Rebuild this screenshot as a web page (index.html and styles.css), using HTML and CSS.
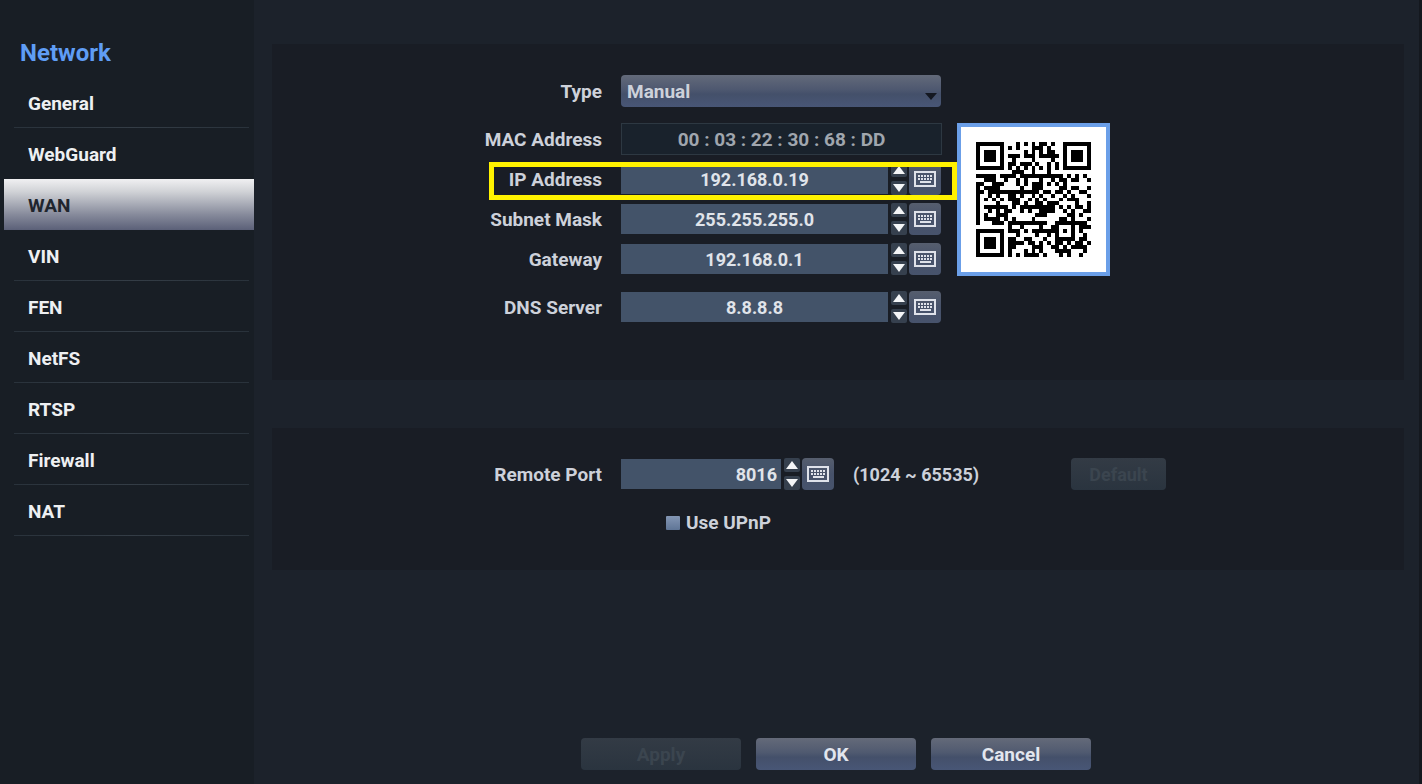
FILE: index.html
```
<!DOCTYPE html>
<html lang="en">
<head>
  <meta charset="UTF-8">
  <meta name="viewport" content="width=device-width, initial-scale=1.0">
  <title>Network - WAN</title>
  <link rel="stylesheet" href="styles.css">
</head>
<body>
  <svg class="sprite" aria-hidden="true">
    <symbol id="keyboard" viewBox="0 0 22 16">
      <path fill="none" stroke="#dfe2ea" stroke-width="2" d="M1 1h20v14H1z"/>
      <path fill="none" stroke="#dfe2ea" stroke-width="2" stroke-dasharray="2 1" d="M4 5h14M4 8h14"/>
      <path fill="none" stroke="#dfe2ea" stroke-width="2" d="M6 11h11"/>
    </symbol>
  </svg>

  <nav class="sidebar">
    <h1>Network</h1>
    <a href="#general">General</a>
    <a href="#webguard" class="no-line">WebGuard</a>
    <a href="#wan" class="active">WAN</a>
    <a href="#vin">VIN</a>
    <a href="#fen">FEN</a>
    <a href="#netfs">NetFS</a>
    <a href="#rtsp">RTSP</a>
    <a href="#firewall">Firewall</a>
    <a href="#nat">NAT</a>
  </nav>

  <main>
    <section class="panel address">
      <div class="fields">
        <div class="row">
          <label for="type">Type</label>
          <div class="select">
            <select id="type">
              <option>Manual</option>
              <option>DHCP</option>
            </select>
          </div>
        </div>
        <div class="row spaced">
          <label for="mac">MAC Address</label>
          <input id="mac" class="readonly" type="text" value="00 : 03 : 22 : 30 : 68 : DD" readonly>
        </div>
        <div class="row highlight">
          <label for="ip">IP Address</label>
          <div class="entry">
            <input id="ip" type="text" value="192.168.0.19">
            <div class="spin"><button class="up" aria-label="Up"></button><button class="down" aria-label="Down"></button></div>
            <button class="key" aria-label="Keyboard"><svg><use href="#keyboard"/></svg></button>
          </div>
        </div>
        <div class="row">
          <label for="mask">Subnet Mask</label>
          <div class="entry">
            <input id="mask" type="text" value="255.255.255.0">
            <div class="spin"><button class="up" aria-label="Up"></button><button class="down" aria-label="Down"></button></div>
            <button class="key" aria-label="Keyboard"><svg><use href="#keyboard"/></svg></button>
          </div>
        </div>
        <div class="row">
          <label for="gateway">Gateway</label>
          <div class="entry">
            <input id="gateway" type="text" value="192.168.0.1">
            <div class="spin"><button class="up" aria-label="Up"></button><button class="down" aria-label="Down"></button></div>
            <button class="key" aria-label="Keyboard"><svg><use href="#keyboard"/></svg></button>
          </div>
        </div>
        <div class="row spaced">
          <label for="dns">DNS Server</label>
          <div class="entry">
            <input id="dns" type="text" value="8.8.8.8">
            <div class="spin"><button class="up" aria-label="Up"></button><button class="down" aria-label="Down"></button></div>
            <button class="key" aria-label="Keyboard"><svg><use href="#keyboard"/></svg></button>
          </div>
        </div>
      </div>
      <div class="qr">
        <svg viewBox="0 0 29 29" shape-rendering="crispEdges" role="img" aria-label="Registration QR code"><path id="qr-path"/></svg>
      </div>
    </section>

    <section class="panel port">
      <div class="row">
        <label for="port">Remote Port</label>
        <div class="entry port-entry">
          <input id="port" type="text" value="8016">
          <div class="spin"><button class="up" aria-label="Up"></button><button class="down" aria-label="Down"></button></div>
          <button class="key" aria-label="Keyboard"><svg><use href="#keyboard"/></svg></button>
        </div>
        <span class="range">(1024 ~ 65535)</span>
        <button class="btn default" disabled>Default</button>
      </div>
      <div class="upnp">
        <input id="upnp" type="checkbox">
        <label for="upnp">Use UPnP</label>
      </div>
    </section>

    <div class="actions">
      <button class="btn" disabled>Apply</button>
      <button class="btn">OK</button>
      <button class="btn">Cancel</button>
    </div>
  </main>

  <script src="qr.js"></script>
</body>
</html>
```

FILE: styles.css
```
*, *::before, *::after {
  box-sizing: border-box;
}
body {
  margin: 0;
  min-height: 100vh;
  display: flex;
  background: #1c222b;
  border-right: 3px solid #14181e;
  color: #cdd1da;
  font-family: Roboto, "Liberation Sans", sans-serif;
  font-size: 19px;
  font-weight: bold;
  line-height: 26px;
}
input, select, button {
  font: inherit;
  color: inherit;
  margin: 0;
  padding: 0;
  border: 0;
}
.sprite {
  display: none;
}

/* left menu */
.sidebar {
  flex: 0 0 254px;
  padding: 38px 0 0 4px;
  background: #181e25;
}
.sidebar h1 {
  margin: 0 0 9px 16px;
  font-size: 24px;
  line-height: 30px;
  color: #5f9df5;
}
.sidebar a {
  display: block;
  height: 51px;
  padding-left: 24px;
  line-height: 54px;
  color: #eef0f2;
  text-decoration: none;
  background: linear-gradient(to right, #29323b, #343d46, #29323b) 10px bottom / 235px 1px no-repeat;
}
.sidebar a.no-line {
  background: none;
}
.sidebar a.active {
  background: linear-gradient(to bottom, #f0f0f2 0%, #d0d2d6 25%, #868a9b 70%, #5b6078 100%);
  color: #20252e;
}

/* content */
main {
  flex: 1;
  display: flex;
  flex-direction: column;
  padding: 44px 15px 14px 18px;
}
.panel {
  background: #191d25;
}
.address {
  display: flex;
  align-items: flex-start;
  gap: 15px;
  min-height: 336px;
  padding: 31px 0;
}
.row {
  display: flex;
  align-items: center;
  height: 32px;
  position: relative;
}
.row + .row {
  margin-top: 8px;
}
.row + .row.spaced {
  margin-top: 16px;
}
.row > label {
  width: 330px;
  margin-right: 19px;
  padding-top: 2px;
  text-align: right;
}
.highlight::after {
  content: "";
  position: absolute;
  z-index: 1;
  top: -1px;
  left: 217px;
  width: 468px;
  height: 38px;
  border: 5px solid #fff200;
  pointer-events: none;
}
.select {
  position: relative;
}
.select select {
  appearance: none;
  display: block;
  width: 320px;
  height: 32px;
  padding: 2px 0 0 6px;
  border-radius: 4px;
  background: linear-gradient(to bottom, #636a7a, #4e5870 45%, #44506a 60%, #485676);
}
.select::after {
  content: "";
  position: absolute;
  right: 4px;
  bottom: 7px;
  border: 6px solid transparent;
  border-top: 7px solid #141821;
  border-bottom: 0;
  pointer-events: none;
}
.readonly {
  width: 321px;
  height: 32px;
  border: 1px solid #2d3842;
  background: #19222c;
  color: #a0a6ae;
  text-align: center;
}
.entry {
  display: flex;
  align-items: center;
}
.entry input {
  width: 267px;
  height: 30px;
  background: #435369;
  color: #e0e4ea;
  font-size: 18px;
  text-align: center;
}
.spin {
  display: flex;
  flex-direction: column;
  gap: 4px;
  margin: 0 2px 0 3px;
}
.spin button {
  display: flex;
  align-items: center;
  justify-content: center;
  width: 16px;
  height: 14px;
  border-radius: 2px;
  background: #36404e;
}
.spin button::before {
  content: "";
  border: 6px solid transparent;
}
.spin .up::before {
  border-top: 0;
  border-bottom: 8px solid #f4f5f7;
}
.spin .down::before {
  border-bottom: 0;
  border-top: 8px solid #f4f5f7;
}
.key {
  display: flex;
  align-items: center;
  justify-content: center;
  width: 32px;
  height: 32px;
  border-radius: 4px;
  background: linear-gradient(to bottom, #565e6e, #47526a 50%, #47536c);
}
.key svg {
  width: 22px;
  height: 16px;
}
.qr {
  margin-top: 48px;
  padding: 15px;
  border: 4px solid #6b9fe8;
  background: #fff;
}
.qr svg {
  display: block;
  width: 115px;
  height: 115px;
}

/* remote port */
.port {
  margin-top: 48px;
  min-height: 142px;
  padding-top: 30px;
}
.entry.port-entry input {
  width: 160px;
  padding-right: 4px;
  text-align: right;
}
.range {
  width: 218px;
  margin-left: 19px;
  padding-top: 2px;
  font-size: 18px;
}
.upnp {
  display: flex;
  align-items: center;
  gap: 6px;
  margin: 20px 0 0 394px;
}
.upnp input {
  appearance: none;
  width: 14px;
  height: 14px;
  border-radius: 1px;
  background: linear-gradient(to bottom, #8396b4, #5f7596);
}

/* buttons */
.btn {
  width: 160px;
  height: 32px;
  padding-top: 2px;
  border-radius: 4px;
  background: linear-gradient(to bottom, #646a79, #505a70 45%, #44506a 60%, #485676);
  color: #e2e6ee;
}
.btn:disabled {
  background: linear-gradient(to bottom, #333b45, #2a343f);
  color: #3b454f;
}
.btn.default {
  width: 95px;
  font-size: 18px;
}
.actions {
  display: flex;
  justify-content: center;
  gap: 15px;
  margin-top: auto;
  padding-right: 4px;
}
```

FILE: qr.js
```
// QR code, version 3, error level L, mask 2
const SIZE = 29;
const DATA_LEN = 55;
const EC_LEN = 15;
const FORMAT = '111110110101010';

function multiply(a, b) {
  let r = 0;
  while (b) {
    if (b & 1) r ^= a;
    a <<= 1;
    if (a & 256) a ^= 0x11d;
    b >>= 1;
  }
  return r;
}

function codewords(text) {
  let bits = '0100' + text.length.toString(2).padStart(8, '0');
  for (const ch of text) bits += ch.charCodeAt(0).toString(2).padStart(8, '0');
  bits += '0000';
  const data = bits.match(/.{8}/g).map(b => parseInt(b, 2));
  for (let pad = 0xec; data.length < DATA_LEN; pad ^= 0xec ^ 0x11) data.push(pad);

  // generator polynomial, highest term left out
  const gen = new Array(EC_LEN).fill(0);
  gen[EC_LEN - 1] = 1;
  let root = 1;
  for (let i = 0; i < EC_LEN; i++) {
    for (let j = 0; j < EC_LEN; j++) {
      gen[j] = multiply(gen[j], root) ^ (gen[j + 1] || 0);
    }
    root = multiply(root, 2);
  }
  const ec = new Array(EC_LEN).fill(0);
  for (const b of data) {
    const factor = b ^ ec.shift();
    ec.push(0);
    gen.forEach((g, i) => ec[i] ^= multiply(g, factor));
  }
  return data.concat(ec);
}

function buildQr(text) {
  const grid = Array.from({ length: SIZE }, () => new Array(SIZE).fill(null));

  for (let i = 0; i < SIZE; i++) {
    grid[6][i] = grid[i][6] = i % 2 === 0;
  }
  for (const [cy, cx] of [[3, 3], [3, SIZE - 4], [SIZE - 4, 3]]) {
    for (let y = -4; y <= 4; y++) {
      for (let x = -4; x <= 4; x++) {
        const d = Math.max(Math.abs(x), Math.abs(y));
        if (cy + y in grid && cx + x >= 0 && cx + x < SIZE) grid[cy + y][cx + x] = d !== 2 && d !== 4;
      }
    }
  }
  for (let y = -2; y <= 2; y++) {
    for (let x = -2; x <= 2; x++) {
      grid[22 + y][22 + x] = Math.max(Math.abs(x), Math.abs(y)) !== 1;
    }
  }

  for (let i = 0; i < 15; i++) {
    const on = FORMAT[i] === '1';
    if (i < 6) grid[8][i] = on;
    else if (i < 8) grid[8][i + 1] = on;
    else if (i === 8) grid[7][8] = on;
    else grid[14 - i][8] = on;
    if (i < 7) grid[SIZE - 1 - i][8] = on;
    else grid[8][SIZE - 15 + i] = on;
  }
  grid[SIZE - 8][8] = true;

  const stream = codewords(text).map(b => b.toString(2).padStart(8, '0')).join('');
  let n = 0;
  let up = true;
  for (let right = SIZE - 1; right > 0; right -= 2) {
    if (right === 6) right = 5;
    for (let i = 0; i < SIZE; i++) {
      const y = up ? SIZE - 1 - i : i;
      for (const x of [right, right - 1]) {
        if (grid[y][x] !== null) continue;
        grid[y][x] = (stream[n++] === '1') !== (x % 3 === 0);
      }
    }
    up = !up;
  }
  return grid;
}

let path = '';
buildQr('costar://192.168.0.19:8016/register?userid=admin').forEach((row, y) => {
  row.forEach((on, x) => {
    if (on) path += `M${x} ${y}h1v1h-1z`;
  });
});
document.getElementById('qr-path').setAttribute('d', path);
```
